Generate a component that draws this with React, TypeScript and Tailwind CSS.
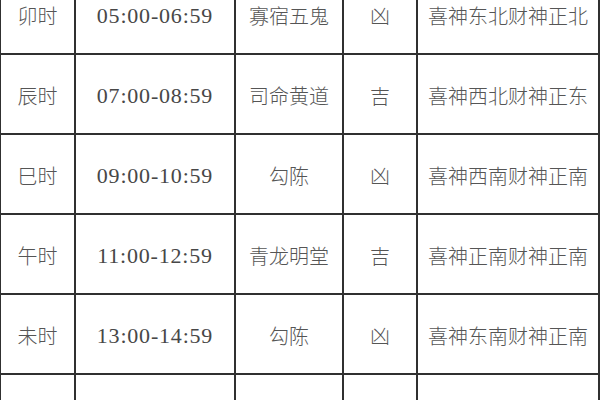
import React from "react";

const rows = [
  ["卯时", "05:00-06:59", "寡宿五鬼", "凶", "喜神东北财神正北"],
  ["辰时", "07:00-08:59", "司命黄道", "吉", "喜神西北财神正东"],
  ["巳时", "09:00-10:59", "勾陈", "凶", "喜神西南财神正南"],
  ["午时", "11:00-12:59", "青龙明堂", "吉", "喜神正南财神正南"],
  ["未时", "13:00-14:59", "勾陈", "凶", "喜神东南财神正南"],
  ["", "", "", "", ""],
];

const cjk = "font-['Noto_Sans_CJK_SC',sans-serif] text-[20px] font-light";

export default function App() {
  return (
    <div className="w-[600px] h-[400px] overflow-hidden bg-white">
      <div className="-mt-[25px] grid grid-cols-[73px_158px_106px_72px_180px] gap-[2px] bg-[#303030] pl-[1px] pr-[2px] auto-rows-[78px]">
        {rows.map((r, i) => (
          <React.Fragment key={i}>
            <div className={`bg-white flex items-center justify-center pt-[3px] text-[#555555] ${cjk}`}>{r[0]}</div>
            <div className="bg-white flex items-center justify-center pt-[3px] text-[#474747] font-['Liberation_Serif',serif] text-[22px] tracking-[0.8px]">{r[1]}</div>
            <div className={`bg-white flex items-center justify-center pt-[3px] text-[#555555] ${cjk}`}>{r[2]}</div>
            <div className={`bg-white flex items-center justify-center pt-[3px] text-[#555555] ${cjk}`}>{r[3]}</div>
            <div className={`bg-white flex items-center justify-center pt-[3px] text-[#555555] ${cjk}`}>{r[4]}</div>
          </React.Fragment>
        ))}
      </div>
    </div>
  );
}
